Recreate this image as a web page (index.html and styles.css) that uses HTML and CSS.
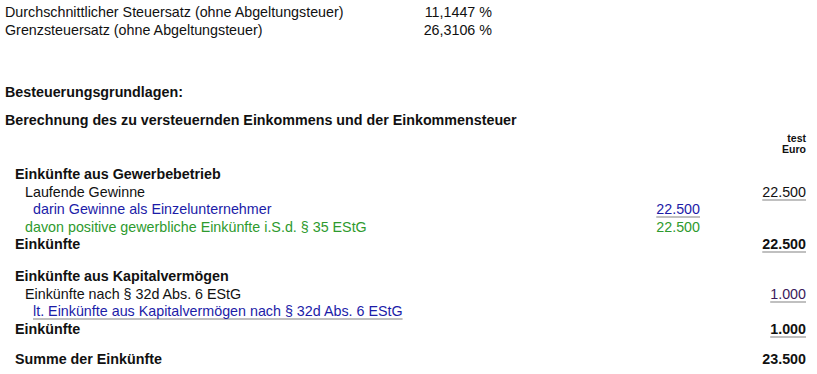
FILE: index.html
```html
<!DOCTYPE html>
<html lang="de">
<head>
<meta charset="utf-8">
<link rel="stylesheet" href="styles.css">
</head>
<body>
<div class="page">
  <div class="rates">
    <div class="rate-row"><span>Durchschnittlicher Steuersatz (ohne Abgeltungsteuer)</span><span class="num">11,1447 %</span></div>
    <div class="rate-row"><span>Grenzsteuersatz (ohne Abgeltungsteuer)</span><span class="num">26,3106 %</span></div>
  </div>

  <div class="h1">Besteuerungsgrundlagen:</div>
  <div class="h2">Berechnung des zu versteuernden Einkommens und der Einkommensteuer</div>

  <div class="colhead"><span>test</span><span>Euro</span></div>

  <div class="table">
    <div class="row bold"><span class="lbl in1">Einkünfte aus Gewerbebetrieb</span><span class="mid"></span><span class="right"></span></div>
    <div class="row"><span class="lbl in2">Laufende Gewinne</span><span class="mid"></span><span class="right"><u>22.500</u></span></div>
    <div class="row blue"><span class="lbl in3">darin Gewinne als Einzelunternehmer</span><span class="mid"><u>22.500</u></span><span class="right"></span></div>
    <div class="row green"><span class="lbl in2">davon positive gewerbliche Einkünfte i.S.d. § 35 EStG</span><span class="mid">22.500</span><span class="right"></span></div>
    <div class="row bold"><span class="lbl in1">Einkünfte</span><span class="mid"></span><span class="right"><u>22.500</u></span></div>
    <div class="spacer"></div>
    <div class="row bold"><span class="lbl in1">Einkünfte aus Kapitalvermögen</span><span class="mid"></span><span class="right"></span></div>
    <div class="row"><span class="lbl in2">Einkünfte nach § 32d Abs. 6 EStG</span><span class="mid"></span><span class="right purple"><u>1.000</u></span></div>
    <div class="row blue"><span class="lbl in3"><u>lt. Einkünfte aus Kapitalvermögen nach § 32d Abs. 6 EStG</u></span><span class="mid"></span><span class="right"></span></div>
    <div class="row bold"><span class="lbl in1">Einkünfte</span><span class="mid"></span><span class="right"><u>1.000</u></span></div>
    <div class="spacer2"></div>
    <div class="row bold"><span class="lbl in1">Summe der Einkünfte</span><span class="mid"></span><span class="right">23.500</span></div>
  </div>
</div>
</body>
</html>
```

FILE: styles.css
```css
html, body {
  margin: 0;
  padding: 0;
  background: #ffffff;
}
.page {
  width: 817px;
  height: 374px;
  overflow: hidden;
  font-family: "Liberation Sans", Arial, sans-serif;
  font-size: 14.3px;
  color: #111111;
  padding: 3px 11px 0 5px;
  box-sizing: border-box;
}
.rates {
  display: flex;
  flex-direction: column;
}
.rate-row {
  display: grid;
  grid-template-columns: 340px 147px;
  height: 18px;
  line-height: 18px;
  white-space: nowrap;
}
.num {
  text-align: right;
}
.h1 {
  font-weight: bold;
  margin-top: 44px;
  height: 18px;
  line-height: 18px;
}
.h2 {
  font-weight: bold;
  margin-top: 10px;
  height: 18px;
  line-height: 18px;
  white-space: nowrap;
}
.colhead {
  display: flex;
  flex-direction: column;
  align-items: flex-end;
  font-size: 10.5px;
  font-weight: bold;
  line-height: 11px;
  padding-top: 3.5px;
  height: 37px;
  box-sizing: border-box;
}
.table {
  display: flex;
  flex-direction: column;
}
.row {
  display: grid;
  grid-template-columns: 1fr 95px 106px;
  height: 17.6px;
  line-height: 17.6px;
  white-space: nowrap;
}
.spacer {
  height: 14px;
}
.spacer2 {
  height: 13px;
}
.bold {
  font-weight: bold;
}
.lbl.in1 { padding-left: 10px; }
.lbl.in2 { padding-left: 20px; }
.lbl.in3 { padding-left: 28px; }
.mid, .right {
  text-align: right;
}
.blue {
  color: #1c1ca8;
}
.green {
  color: #2e9a2e;
}
.purple {
  color: #3a1a5a;
}
u {
  text-decoration: underline;
  text-decoration-color: #c0c0c0;
  text-decoration-thickness: 2px;
  text-underline-offset: 2px;
  text-decoration-skip-ink: none;
}
```
